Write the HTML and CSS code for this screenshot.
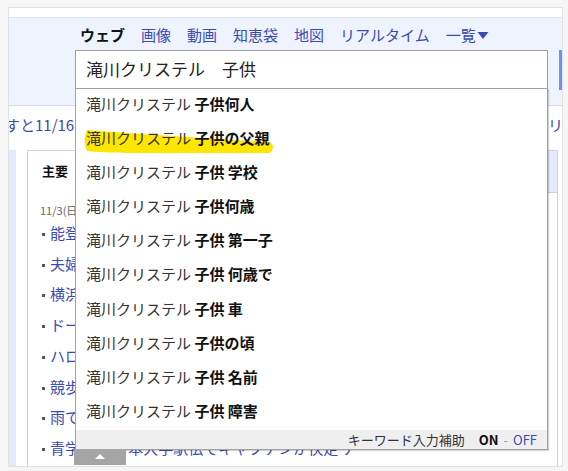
FILE: index.html
```html
<!DOCTYPE html>
<html lang="ja">
<head>
<meta charset="utf-8">
<title>検索</title>
<link rel="stylesheet" href="styles.css">
</head>
<body>
<div class="page">
  <div class="frame">
    <div class="topstrip"></div>
    <div class="header">
      <nav class="nav">
        <span class="nav-item active">ウェブ</span>
        <a class="nav-item">画像</a>
        <a class="nav-item">動画</a>
        <a class="nav-item">知恵袋</a>
        <a class="nav-item">地図</a>
        <a class="nav-item">リアルタイム</a>
        <a class="nav-item more">一覧<svg class="caret" width="12" height="9" viewBox="0 0 12 9"><path d="M0.5 1 L11.5 1 L6 8 Z" fill="currentColor"/></svg></a>
      </nav>
      <div class="search-row">
        <div class="search">
          <div class="query">滝川クリステル　子供</div>
          <div class="suggest">
            <ul class="suggest-list">
              <li><span class="base">滝川クリステル</span> <b>子供何人</b></li>
              <li class="marked"><svg class="marker" width="196" height="28" viewBox="0 0 196 28"><path d="M5 2 C60 6 130 11 188 14 Q194 19 188 25 L60 25 C30 25 12 24 5 23 Q0 12 5 2 Z" fill="#ffe600"/></svg><span class="base">滝川クリステル</span> <b>子供の父親</b></li>
              <li><span class="base">滝川クリステル</span> <b>子供 学校</b></li>
              <li><span class="base">滝川クリステル</span> <b>子供何歳</b></li>
              <li><span class="base">滝川クリステル</span> <b>子供 第一子</b></li>
              <li><span class="base">滝川クリステル</span> <b>子供 何歳で</b></li>
              <li><span class="base">滝川クリステル</span> <b>子供 車</b></li>
              <li><span class="base">滝川クリステル</span> <b>子供の頃</b></li>
              <li><span class="base">滝川クリステル</span> <b>子供 名前</b></li>
              <li><span class="base">滝川クリステル</span> <b>子供 障害</b></li>
            </ul>
            <div class="assist">キーワード入力補助<b class="on">ON</b><span class="sep">-</span><a class="off">OFF</a></div>
            <div class="toggle"><svg width="10" height="5" viewBox="0 0 10 5"><path d="M0 5 L5 0 L10 5 Z" fill="#fff"/></svg></div>
          </div>
        </div>
        <div class="scrollbar"></div>
      </div>
    </div>
    <div class="notice">
      <a class="notice-left">すと11/16（土）までのキャンペーン実施中です</a>
      <a class="notice-right">リアル</a>
    </div>
    <div class="main">
      <div class="stripe"></div>
      <div class="box">
        <div class="box-head"><span class="box-tab">主要</span><span class="box-fill"></span></div>
        <div class="box-body">
          <div class="date">11/3(日) 17時46分更新</div>
          <ul class="news">
            <li><a>能登で記録的大雨 被害状況を確認</a></li>
            <li><a>夫婦で過ごす休日の過ごし方</a></li>
            <li><a>横浜で大規模イベント開催へ</a></li>
            <li><a>ドーム公演に多くのファン</a></li>
            <li><a>ハロウィーン後の街の様子</a></li>
            <li><a>競歩代表が内定 五輪へ</a></li>
            <li><a>雨で交通機関に乱れ</a></li>
            <li><a>青学大 全日本大学駅伝でキャプテンが快走 ナ</a></li>
          </ul>
        </div>
      </div>
    </div>
  </div>
</div>
</body>
</html>
```

FILE: styles.css
```css
* { box-sizing: border-box; }
html, body { margin: 0; padding: 0; }
body {
  background: #f6f6f6;
  font-family: "Noto Sans CJK JP", "Noto Sans", sans-serif;
  color: #222;
}
a { color: #3a4bb0; text-decoration: none; }
ul { list-style: none; margin: 0; padding: 0; }

.page {
  padding: 7px 0 0 8px;
}
.frame {
  width: 555px;
  height: 460px;
  border: 1px solid #e1e1e1;
  background: #fff;
  overflow: hidden;
}
.topstrip { height: 9px; background: #fff; }

.header {
  border-top: 1px solid #dce4f5;
  border-bottom: 1px solid #d3dcef;
  background: #eef3fd;
  height: 89px;
  padding-top: 7px;
}
.nav {
  display: flex;
  align-items: center;
  gap: 16px;
  padding-left: 71px;
  height: 20px;
  font-size: 15px;
  line-height: 20px;
}
.nav-item { white-space: nowrap; }
.nav-item.active { font-weight: bold; color: #111; }
.more { display: flex; align-items: center; }
.caret { margin-left: 1px; }

.search-row {
  display: flex;
  margin-top: 5px;
}
.search {
  position: relative;
  margin-left: 66px;
  width: 473px;
  height: 39px;
  border: 1px solid #9c9c9c;
  background: #fff;
}
.query {
  padding-left: 10px;
  font-size: 17px;
  line-height: 36px;
  color: #222;
  white-space: nowrap;
}
.scrollbar {
  margin-left: auto;
  width: 3px;
  height: 40px;
  background: #7090f0;
}

.suggest {
  position: absolute;
  z-index: 10;
  left: -1px;
  top: 37px;
  width: 473px;
  border: 1px solid #a2a2a2;
  background: #fff;
  box-shadow: 1px 1px 1px rgba(0,0,0,0.18);
}
.suggest-list li {
  position: relative;
  height: 34.1px;
  line-height: 29px;
  padding-left: 10px;
  font-size: 15px;
  white-space: nowrap;
}
.suggest-list .base, .suggest-list b { position: relative; z-index: 1; }
.suggest-list .base { color: #333; }
.suggest-list b { color: #111; font-weight: bold; }
.marker {
  position: absolute;
  left: 6px;
  top: 5px;
  z-index: 0;
}
.assist {
  height: 19px;
  background: #efefef;
  text-align: right;
  padding-right: 10px;
  font-size: 13px;
  line-height: 19px;
  color: #333;
  white-space: nowrap;
}
.assist .on { margin-left: 14px; color: #111; }
.assist .sep { color: #999; margin: 0 5px; }
.assist .off { color: #3a4bb0; }
.toggle {
  position: absolute;
  left: -2px;
  top: 100%;
  width: 52px;
  height: 16px;
  background: #a5a5a5;
  display: flex;
  align-items: center;
  justify-content: center;
}

.notice {
  display: flex;
  height: 44px;
  line-height: 38px;
  font-size: 15px;
  white-space: nowrap;
}
.notice-left {
  flex: 1;
  overflow: hidden;
  margin-left: -4px;
}
.notice-right {
  flex: none;
  width: 14px;
  overflow: hidden;
  margin-left: auto;
}

.main {
  display: flex;
  height: 320px;
}
.stripe {
  flex: none;
  width: 7px;
  background: #e3eafb;
  margin-right: 11px;
}
.box {
  flex: none;
  width: 531px;
  border: 1px solid #c8d3ee;
  background: #fff;
}
.box-head {
  display: flex;
  height: 42px;
}
.box-tab {
  width: 60px;
  padding-left: 14px;
  font-size: 13px;
  font-weight: bold;
  line-height: 40px;
  color: #111;
}
.box-fill {
  flex: 1;
  background: #e5ebfc;
  border-left: 1px solid #c8d3ee;
  border-bottom: 1px solid #c8d3ee;
}
.box-body { padding-left: 12px; }
.date {
  margin-top: 9px;
  font-size: 11px;
  line-height: 16px;
  color: #666;
}
.news li {
  position: relative;
  padding-left: 10px;
  font-size: 15px;
  line-height: 30.7px;
  white-space: nowrap;
}
.news li::before {
  content: "";
  position: absolute;
  left: 2px;
  top: 15px;
  width: 3px;
  height: 3px;
  background: #555;
}
```
